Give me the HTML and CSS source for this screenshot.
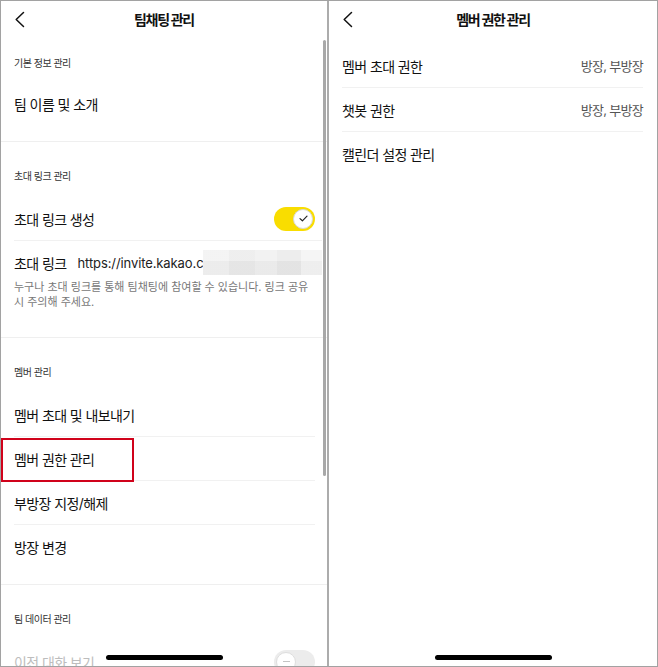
FILE: index.html
```html
<!DOCTYPE html>
<html lang="ko">
<head>
<meta charset="utf-8">
<title>팀채팅 관리</title>
<link rel="stylesheet" href="styles.css">
</head>
<body>
<div class="frame">
  <section class="screen screen-left">
    <header class="nav">
      <span class="nav-back"><svg width="11" height="17" viewBox="0 0 11 17"><path d="M9.5 1.5 L2.2 8.5 L9.5 15.5" fill="none" stroke="#111" stroke-width="1.5" stroke-linecap="round" stroke-linejoin="round"/></svg></span>
      <h1 class="nav-title">팀채팅 관리</h1>
      <span></span>
    </header>

    <div class="group group-first">
      <p class="group-label">기본 정보 관리</p>
      <div class="row">팀 이름 및 소개</div>
    </div>

    <div class="group group-invite">
      <p class="group-label">초대 링크 관리</p>
      <div class="row">
        <span>초대 링크 생성</span>
        <span class="switch switch-on"><span class="knob"><svg width="9" height="7" viewBox="0 0 9 7"><path d="M1 3.6 L3.4 5.8 L8 1.2" fill="none" stroke="#222" stroke-width="1.2" stroke-linecap="round" stroke-linejoin="round"/></svg></span></span>
      </div>
      <div class="invite">
        <span class="invite-label">초대 링크</span>
        <span class="invite-url">https://invite.kakao.c</span>
        <span class="redacted"></span>
      </div>
      <p class="invite-note">누구나 초대 링크를 통해 팀채팅에 참여할 수 있습니다. 링크 공유 시 주의해 주세요.</p>
    </div>

    <div class="group">
      <p class="group-label">멤버 관리</p>
      <div class="row">멤버 초대 및 내보내기</div>
      <div class="row row-marked">멤버 권한 관리<span class="mark"></span></div>
      <div class="row">부방장 지정/해제</div>
      <div class="row">방장 변경</div>
    </div>

    <div class="group group-last">
      <p class="group-label">팀 데이터 관리</p>
      <div class="row row-disabled">
        <span>이전 대화 보기</span>
        <span class="switch switch-off"><span class="knob"><span class="dash"></span></span></span>
      </div>
    </div>

    <span class="scrollbar"></span>
    <span class="home-bar"></span>
  </section>

  <section class="screen screen-right">
    <header class="nav">
      <span class="nav-back"><svg width="11" height="17" viewBox="0 0 11 17"><path d="M9.5 1.5 L2.2 8.5 L9.5 15.5" fill="none" stroke="#111" stroke-width="1.5" stroke-linecap="round" stroke-linejoin="round"/></svg></span>
      <h1 class="nav-title">멤버 권한 관리</h1>
      <span></span>
    </header>
    <div class="perm-list">
      <div class="row"><span>멤버 초대 권한</span><span class="row-value">방장, 부방장</span></div>
      <div class="row"><span>챗봇 권한</span><span class="row-value">방장, 부방장</span></div>
      <div class="row"><span>캘린더 설정 관리</span></div>
    </div>
    <span class="home-bar"></span>
  </section>
</div>
</body>
</html>
```

FILE: styles.css
```css
* { box-sizing: border-box; margin: 0; padding: 0; }

html, body {
  margin: 0;
  background: #fff;
  overflow: hidden;
}

body {
  font-family: "Inter", "Noto Sans CJK KR", sans-serif;
  color: #111;
}

.frame {
  width: 658px;
  height: 667px;
  border: 1px solid #a2a2a2;
  display: flex;
  overflow: hidden;
}

.screen {
  position: relative;
  overflow: hidden;
  background: #fff;
}

.screen-left {
  width: 328px;
  border-right: 2px solid #acacac;
}

.screen-right {
  flex: 1;
}

/* navigation bar */
.nav {
  height: 37px;
  display: grid;
  grid-template-columns: 44px 1fr 44px;
  align-items: center;
}

.nav-back {
  padding-left: 13px;
  display: flex;
  align-items: center;
}

.nav-title {
  text-align: center;
  font-size: 14px;
  font-weight: 700;
  letter-spacing: -1.3px;
  line-height: 20px;
  color: #111;
}

/* groups */
.group {
  padding: 27px 12px 16px 13px;
  border-bottom: 1px solid #efefef;
}

.group-first {
  padding-top: 18px;
}

.group-first .group-label {
  margin-bottom: 12px;
}

.group-invite {
  padding-bottom: 27px;
}

.group-last {
  border-bottom: none;
}

.group-label {
  font-size: 10px;
  line-height: 14px;
  letter-spacing: -0.5px;
  color: #333;
  margin-bottom: 14px;
}

.row {
  height: 43px;
  display: flex;
  align-items: center;
  justify-content: space-between;
  font-size: 14px;
  letter-spacing: -0.6px;
  color: #111;
}

.row + .row {
  height: 44px;
  border-top: 1px solid #f1f1f1;
}

.row-marked {
  position: relative;
}

.mark {
  position: absolute;
  top: 1px;
  left: -13px;
  width: 133px;
  height: 44px;
  border: 2px solid #d0021b;
}

.row-disabled {
  color: #bdbdbd;
}

/* switches */
.switch {
  width: 41px;
  height: 24px;
  border-radius: 12px;
  display: flex;
  align-items: center;
  padding: 0 2px;
}

.switch-on {
  background: #f9dd00;
  justify-content: flex-end;
}

.switch-off {
  background: #ececec;
  justify-content: flex-start;
}

.knob {
  width: 20px;
  height: 20px;
  border-radius: 50%;
  background: #fff;
  border: 1px solid #d8d8d8;
  display: flex;
  align-items: center;
  justify-content: center;
}

.switch-off .knob {
  border-color: #dedede;
}

.dash {
  width: 7px;
  height: 1.5px;
  background: #c4c4c4;
}

/* invite link */
.invite {
  display: flex;
  align-items: center;
  height: 35px;
  padding-top: 9px;
  border-top: 1px solid #f1f1f1;
  margin-right: -7px;
}

.invite-label {
  font-size: 14px;
  letter-spacing: -0.6px;
  color: #111;
  margin-right: 11px;
  white-space: nowrap;
}

.invite-url {
  font-size: 13px;
  letter-spacing: -0.1px;
  color: #222;
  white-space: nowrap;
  flex: none;
}

.redacted {
  flex: 1;
  min-width: 0;
  height: 25px;
  background:
    linear-gradient(180deg, rgba(255,255,255,0.25) 0 45%, rgba(0,0,0,0.015) 45% 100%),
    linear-gradient(90deg, #f0f0f0 0 22%, #e9e9e9 22% 44%, #eeeeee 44% 62%, #e7e7e7 62% 82%, #f2f2f2 82% 100%);
}

.invite-note {
  margin-top: 5px;
  font-size: 11px;
  line-height: 15px;
  letter-spacing: 0;
  color: #777;
}

/* right panel list */
.perm-list {
  padding: 6px 14px 0 13px;
}

.row-value {
  font-size: 13px;
  letter-spacing: -0.7px;
  color: #555;
}

/* overlays */
.scrollbar {
  position: absolute;
  top: 39px;
  right: 1px;
  width: 3px;
  height: 436px;
  border-radius: 2px;
  background: #a8a8a8;
}

.home-bar {
  position: absolute;
  bottom: 6px;
  left: 50%;
  width: 117px;
  height: 5px;
  margin-left: -58px;
  border-radius: 3px;
  background: #000;
}
```
